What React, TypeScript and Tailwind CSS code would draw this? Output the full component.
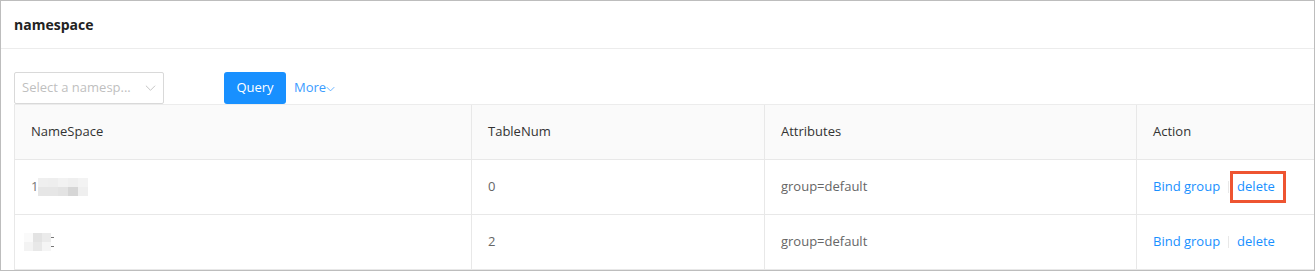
import { FC } from "react";

type Row = {
  name: "first" | "second";
  tableNum: number;
  attributes: string;
  highlightDelete?: boolean;
};

const rows: Row[] = [
  { name: "first", tableNum: 0, attributes: "group=default", highlightDelete: true },
  { name: "second", tableNum: 2, attributes: "group=default" },
];

// pixelated (masked) namespace names from the screenshot
const mosaicFirst = [
  ["#efefef", "#eeeeee", "#f2f2f2", "#efefef", "#f3f3f3"],
  ["#e6e6e6", "#e6e6e6", "#e3e3e3", "#d6d6d6", "#efefef"],
];
const mosaicSecond = [
  ["#fafafa", "#e3e3e3", "#ebebeb"],
  ["#f3f3f3", "#e8e8e8", "#f5f5f5"],
];

const Mosaic: FC<{ cells: string[][]; cellW: number }> = ({ cells, cellW }) => (
  <div className="flex flex-col">
    {cells.map((line, i) => (
      <div key={i} className="flex">
        {line.map((c, j) => (
          <div key={j} className="h-[9px]" style={{ backgroundColor: c, width: cellW }} />
        ))}
      </div>
    ))}
  </div>
);

const NameCell: FC<{ name: Row["name"] }> = ({ name }) => {
  if (name === "first") {
    return (
      <div className="flex items-center">
        <span className="text-[#777]">1</span>
        <Mosaic cells={mosaicFirst} cellW={10} />
      </div>
    );
  }
  return (
    <div className="flex items-center -ml-[7px]">
      <Mosaic cells={mosaicSecond} cellW={9} />
      {/* leftover edge of the masked glyph */}
      <div className="flex flex-col justify-between h-[10px] w-[3px]">
        <div className="h-px bg-[#777]" />
        <div className="h-px bg-[#777]" />
      </div>
    </div>
  );
};

const ChevronDown: FC<{ className?: string }> = ({ className }) => (
  <svg viewBox="0 0 12 8" fill="none" className={className}>
    <path d="M1 1.5 6 6.5 11 1.5" stroke="currentColor" strokeWidth="1" />
  </svg>
);

const cell = "flex items-center pl-[16px] border-l border-[#e8e8e8]";

export default function App() {
  return (
    <div
      className="w-full h-[271px] border border-[#bdbdbd] bg-white text-[13px] text-[#666]"
      style={{ fontFamily: '"Open Sans", "Noto Sans", sans-serif' }}
    >
      <div className="h-[48px] border-b border-[#ececec] flex items-center pl-[13px]">
        <h2 className="text-[14px] font-bold text-[#222]">namespace</h2>
      </div>

      <div className="pl-[13px] pt-[23px]">
        <div className="flex items-center h-[32px]">
          <div className="w-[150px] h-[32px] border border-[#d9d9d9] rounded-[2px] flex items-center justify-between pl-[7px] pr-[7px]">
            <span className="text-[#bfbfbf] truncate">Select a namesp...</span>
            <ChevronDown className="w-[11px] h-[8px] text-[#bfbfbf] shrink-0" />
          </div>
          <button
            type="button"
            className="ml-[60px] w-[62px] h-[32px] rounded-[3px] bg-[#1890ff] text-white text-[13px] font-medium"
          >
            Query
          </button>
          <button type="button" className="ml-[8px] flex items-center text-[#3a9bff] text-[13px]">
            More
            <ChevronDown className="w-[9px] h-[6px] mt-[2px]" />
          </button>
        </div>

        <div className="grid grid-cols-[457px_293px_372px_1fr] border-t border-[#ececec]">
          {["NameSpace", "TableNum", "Attributes", "Action"].map((h) => (
            <div
              key={h}
              className={`${cell} h-[55px] bg-[#fafafa] border-b text-[#333]`}
            >
              {h}
            </div>
          ))}

          {rows.map((r) => (
            <div key={r.name} className="contents">
              <div className={`${cell} h-[55px] border-b`}>
                <NameCell name={r.name} />
              </div>
              <div className={`${cell} h-[55px] border-b`}>{r.tableNum}</div>
              <div className={`${cell} h-[55px] border-b`}>{r.attributes}</div>
              <div className={`${cell} h-[55px] border-b text-[#1890ff]`}>
                <span>Bind group</span>
                <span className="mx-[8px] w-px h-[12px] bg-[#e8e8e8]" />
                <span
                  className={
                    r.highlightDelete
                      ? "border-[3px] border-[#ee5431] pl-[4px] pr-[8px] h-[32px] flex items-center -ml-[7px]"
                      : ""
                  }
                >
                  delete
                </span>
              </div>
            </div>
          ))}
        </div>
      </div>
    </div>
  );
}
